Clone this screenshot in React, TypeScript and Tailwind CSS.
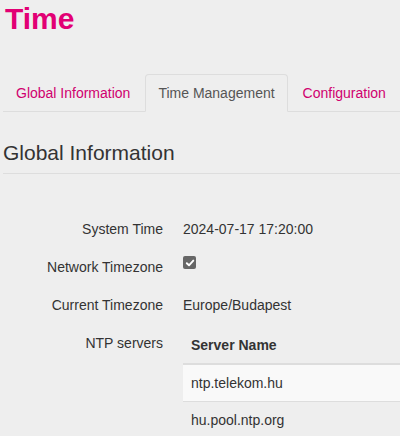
import React from "react";

function Row({ label, children, extra = "" }: { label: string; children: React.ReactNode; extra?: string }) {
  return (
    <div className={`flex items-start ${extra}`}>
      <div className="w-[160px] shrink-0 whitespace-nowrap text-right text-[14px] leading-[20px] text-[#333333]">{label}</div>
      <div className="ml-[20px] min-w-0 flex-1 whitespace-nowrap text-[14px] leading-[20px] text-[#333333]">{children}</div>
    </div>
  );
}

export default function App() {
  return (
    <div
      className="h-[436px] w-[400px] overflow-hidden bg-[#eeeeee] pl-[3px]"
      style={{ fontFamily: '"Liberation Sans", Arial, sans-serif' }}
    >
      <h1 className="pl-[2px] pt-[2px] text-[30px] font-bold leading-[33px] text-[#e20074]">Time</h1>

      <div className="mt-[39px] flex whitespace-nowrap border-b border-[#dddddd]">
        <div className="-mb-px mr-[2px] shrink-0 border border-transparent px-[12px] py-[8px] text-[14px] leading-[20px] text-[#d0006f]">
          Global Information
        </div>
        <div className="-mb-px mr-[2px] shrink-0 rounded-t-[4px] border border-[#dddddd] border-b-transparent bg-[#eeeeee] px-[12px] py-[8px] text-[14px] leading-[20px] text-[#555555]">
          Time Management
        </div>
        <div className="-mb-px mr-[2px] shrink-0 border border-transparent px-[12px] py-[8px] text-[14px] leading-[20px] text-[#d0006f]">
          Configuration
        </div>
      </div>

      <h3 className="mt-[29px] border-b border-[#dddddd] pb-[9px] text-[21px] leading-[23px] text-[#333333]">
        Global Information
      </h3>

      <div className="mt-[45px] flex flex-col">
        <Row label="System Time">2024-07-17 17:20:00</Row>
        <Row label="Network Timezone" extra="mt-[18px]">
          <div className="mt-[-1px] flex h-[13px] w-[13px] items-center justify-center rounded-[2px] bg-[#666666]">
            <svg width="10" height="10" viewBox="0 0 10 10">
              <path d="M1.8 5.2 L4 7.3 L8.3 2.6" fill="none" stroke="white" strokeWidth="1.9" strokeLinecap="round" strokeLinejoin="round" />
            </svg>
          </div>
        </Row>
        <Row label="Current Timezone" extra="mt-[18px]">Europe/Budapest</Row>
        <Row label="NTP servers" extra="mt-[18px]">
          <div className="-mt-[6px] w-full">
            <div className="border-b-2 border-[#dddddd] px-[8px] py-[8px] font-bold">Server Name</div>
            <div className="border-b border-[#dddddd] bg-[#f9f9f9] px-[8px] py-[8px]">ntp.telekom.hu</div>
            <div className="px-[8px] py-[8px]">hu.pool.ntp.org</div>
          </div>
        </Row>
      </div>
    </div>
  );
}
